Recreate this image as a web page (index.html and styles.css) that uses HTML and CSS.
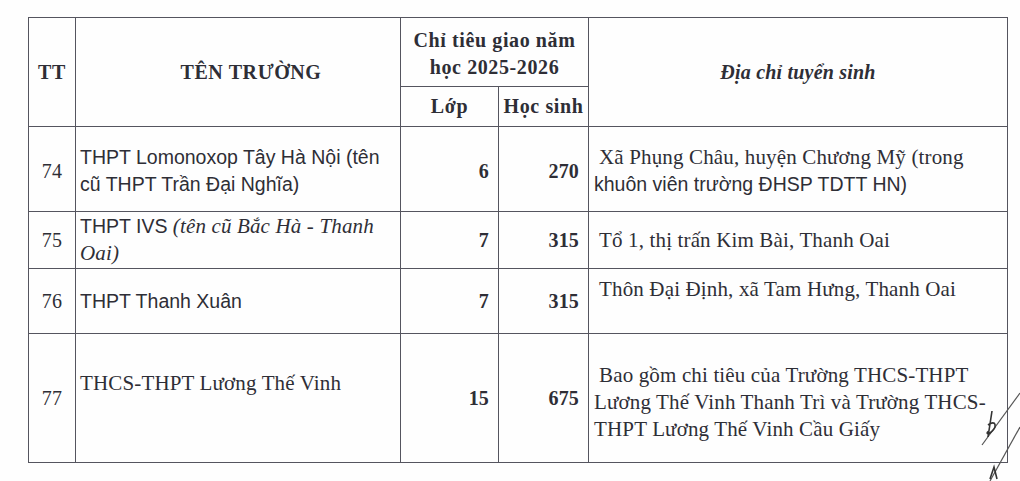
FILE: index.html
```html
<!DOCTYPE html>
<html lang="vi">
<head>
<meta charset="utf-8">
<title>Chỉ tiêu tuyển sinh</title>
<link rel="stylesheet" href="styles.css">
</head>
<body>
<div class="page">
  <table class="quota">
    <colgroup>
      <col class="c-tt"><col class="c-name"><col class="c-lop"><col class="c-hs"><col class="c-addr">
    </colgroup>
    <thead>
      <tr class="h1">
        <th rowspan="2" class="hd">TT</th>
        <th rowspan="2" class="hd name-hd">TÊN TRƯỜNG</th>
        <th colspan="2" class="hd quota-hd">Chỉ tiêu giao năm<br>học 2025-2026</th>
        <th rowspan="2" class="hd addr-hd">Địa chỉ tuyển sinh</th>
      </tr>
      <tr class="h2">
        <th class="hd">Lớp</th>
        <th class="hd">Học sinh</th>
      </tr>
    </thead>
    <tbody>
      <tr class="r74">
        <td class="tt">74</td>
        <td class="name sans">THPT Lomonoxop Tây Hà Nội (tên<br>cũ THPT Trần Đại Nghĩa)</td>
        <td class="num">6</td>
        <td class="num">270</td>
        <td class="addr"><span class="ind">Xã Phụng Châu, huyện Chương Mỹ (trong</span><br><span class="sans">khuôn viên trường ĐHSP TDTT HN)</span></td>
      </tr>
      <tr class="r75">
        <td class="tt">75</td>
        <td class="name"><span class="sans">THPT IVS </span><em>(tên cũ Bắc Hà - Thanh<br>Oai)</em></td>
        <td class="num">7</td>
        <td class="num">315</td>
        <td class="addr"><span class="ind">Tổ 1, thị trấn Kim Bài, Thanh Oai</span></td>
      </tr>
      <tr class="r76">
        <td class="tt">76</td>
        <td class="name sans">THPT Thanh Xuân</td>
        <td class="num">7</td>
        <td class="num">315</td>
        <td class="addr top"><span class="ind">Thôn Đại Định, xã Tam Hưng, Thanh Oai</span></td>
      </tr>
      <tr class="r77">
        <td class="tt">77</td>
        <td class="name up">THCS-THPT Lương Thế Vinh</td>
        <td class="num">15</td>
        <td class="num">675</td>
        <td class="addr"><span class="ind">Bao gồm chi tiêu của Trường THCS-THPT</span><br>Lương Thế Vinh Thanh Trì và Trường THCS-<br>THPT Lương Thế Vinh Cầu Giấy</td>
      </tr>
    </tbody>
  </table>
  <svg class="sign" width="60" height="110" viewBox="0 0 60 110">
    <path d="M60 22 L22 74" stroke="#555" stroke-width="1.2" fill="none"/>
    <path d="M60 56 L30 110" stroke="#555" stroke-width="1.2" fill="none"/>
    <path d="M32 40 L28 66 M28 54 C36 48 38 56 30 62 C27 64 26 62 29 60" stroke="#333" stroke-width="1.6" fill="none"/>
    <path d="M30 108 L34 96 L37 108" stroke="#333" stroke-width="1.6" fill="none"/>
  </svg>
</div>
</body>
</html>
```
FILE: styles.css
```css
html, body {
  margin: 0;
  padding: 0;
  background: #fefefe;
}
.page {
  position: relative;
  width: 1020px;
  height: 481px;
  overflow: hidden;
  padding: 17px 0 0 28px;
  box-sizing: border-box;
}
.quota {
  border-collapse: collapse;
  table-layout: fixed;
  width: 979px;
  font-family: "Liberation Serif", "Times New Roman", serif;
  color: #2e2e36;
  font-size: 21px;
  letter-spacing: 0.15px;
  line-height: 27px;
}
.c-tt { width: 47px; }
.c-name { width: 325px; }
.c-lop { width: 98px; }
.c-hs { width: 90px; }
.c-addr { width: 419px; }
.quota th, .quota td {
  border: 1.5px solid #55555f;
  padding: 0;
  vertical-align: middle;
}
.hd {
  font-weight: bold;
  font-size: 20px;
  letter-spacing: 0.6px;
  text-align: center;
}
.name-hd { padding-left: 26px !important; }
.quota-hd { line-height: 27px; padding-top: 4px !important; }
.addr-hd { font-style: italic; letter-spacing: 0.2px; }
.h1 { height: 69px; }
.h2 { height: 40px; }
.r74 { height: 85px; }
.r75 { height: 57px; }
.r76 { height: 65px; }
.r77 { height: 129px; }
.tt {
  text-align: center;
  font-size: 20px;
}
.name {
  padding-left: 4px !important;
}
.sans {
  font-family: "Liberation Sans", Arial, sans-serif;
  font-size: 19.5px;
  letter-spacing: 0;
}
.name em {
  font-style: italic;
}
.num {
  text-align: right;
  font-weight: bold;
  font-size: 20px;
  padding-right: 9px !important;
}
.r74 td { padding-top: 4px; }
.addr {
  padding-left: 5px !important;
}
.ind { padding-left: 5px; }
.top { vertical-align: top !important; padding-top: 7px !important; }
.up { vertical-align: top !important; padding-top: 36px !important; }
.r77 .addr { padding-top: 9px; }
.sign {
  position: absolute;
  right: 0;
  top: 371px;
}
```
